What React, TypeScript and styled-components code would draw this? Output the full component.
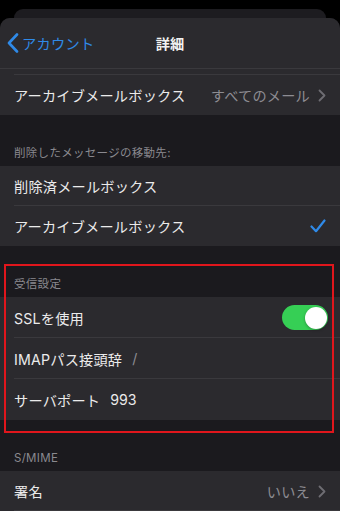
import React, { FunctionComponent } from "react"
import styled, { createGlobalStyle } from "styled-components"

const GlobalStyle = createGlobalStyle`
  html, body {
    margin: 0;
    padding: 0;
    background: #000000;
  }
  body {
    font-family: Inter, "Noto Sans CJK JP", sans-serif;
    -webkit-font-smoothing: antialiased;
  }
`

const Screen = styled.div`
  position: relative;
  width: 340px;
  height: 511px;
  overflow: hidden;
  background: #000000;
  padding-top: 9px;
  box-sizing: border-box;
  display: flex;
  flex-direction: column;
`

const BackCard = styled.div`
  margin: 0 14px;
  height: 9px;
  flex-shrink: 0;
  background: #1d1c20;
  border-radius: 10px 10px 0 0;
`

const Sheet = styled.div`
  flex: 1;
  background: #1b1a1e;
  border-radius: 10px 10px 0 0;
  overflow: hidden;
  display: flex;
  flex-direction: column;
`

const NavBar = styled.div`
  height: 50px;
  flex-shrink: 0;
  background: #2b2a2e;
  border-bottom: 1px solid #3a393d;
  display: flex;
  align-items: center;
  position: relative;
`

const BackButton = styled.div`
  display: flex;
  align-items: center;
  gap: 3px;
  padding-left: 7px;
  color: #2f8ae8;
  font-size: 14.2px;
  letter-spacing: 0.3px;
`

const Title = styled.div`
  position: absolute;
  left: 0;
  right: 0;
  text-align: center;
  color: #f2f2f2;
  font-size: 14.2px;
  font-weight: 600;
  pointer-events: none;
`

const Group = styled.div`
  background: #2b2a2e;
  display: flex;
  flex-direction: column;
`

const ScrolledEdge = styled.div`
  height: 5px;
  border-bottom: 1px solid #3a393d;
  margin-left: 14px;
`

const Row = styled.div<{ $last?: boolean; $h?: number }>`
  height: ${(p) => p.$h ?? 40}px;
  display: flex;
  align-items: center;
  padding: 0 14px;
  box-sizing: border-box;
  position: relative;
  &::after {
    content: "";
    display: ${(p) => (p.$last ? "none" : "block")};
    position: absolute;
    left: 14px;
    right: 0;
    bottom: 0;
    height: 1px;
    background: #3a393d;
  }
`

const Label = styled.span`
  color: #ebebeb;
  font-size: 14.2px;
  letter-spacing: 0.2px;
`

const FieldValue = styled.span<{ $muted?: boolean }>`
  margin-left: 10px;
  color: ${(p) => (p.$muted ? "#8d8c92" : "#ebebeb")};
  font-size: 14.2px;
`

const Detail = styled.span`
  margin-left: auto;
  display: flex;
  align-items: center;
  gap: 8px;
  color: #8d8c92;
  font-size: 14.2px;
  letter-spacing: 0.2px;
`

const SectionHeader = styled.div`
  height: 51px;
  flex-shrink: 0;
  box-sizing: border-box;
  padding: 0 14px 6px;
  display: flex;
  align-items: flex-end;
  color: #8a898f;
  font-size: 11.5px;
  letter-spacing: 0.3px;
`

const Toggle = styled.div<{ $on: boolean }>`
  margin-left: auto;
  margin-right: -2px;
  width: 46px;
  height: 25px;
  border-radius: 13px;
  background: ${(p) => (p.$on ? "#36cf55" : "#3a393d")};
  position: relative;
  &::after {
    content: "";
    position: absolute;
    top: 1.5px;
    ${(p) => (p.$on ? "right: 1.5px;" : "left: 1.5px;")}
    width: 22px;
    height: 22px;
    border-radius: 50%;
    background: #ffffff;
    box-shadow: 0 1px 3px rgba(0, 0, 0, 0.3);
  }
`

const Highlight = styled.div`
  position: absolute;
  left: 4px;
  top: 264px;
  width: 330px;
  height: 169px;
  border: 2px solid #e0161c;
  box-sizing: border-box;
  pointer-events: none;
`

const Chevron: FunctionComponent = () => (
  <svg width="8" height="13" viewBox="0 0 8 13" fill="none">
    <path d="M1.5 1.5 L6.5 6.5 L1.5 11.5" stroke="#6e6d73" strokeWidth="1.8" strokeLinecap="round" strokeLinejoin="round" />
  </svg>
)

const BackChevron: FunctionComponent = () => (
  <svg width="12" height="20" viewBox="0 0 12 20" fill="none">
    <path d="M10 1.5 L2 10 L10 18.5" stroke="#2f8ae8" strokeWidth="2.6" strokeLinecap="round" strokeLinejoin="round" />
  </svg>
)

const Check: FunctionComponent = () => (
  <svg width="16" height="14" viewBox="0 0 16 14" fill="none" style={{ marginLeft: "auto", marginRight: 0 }}>
    <path d="M1.5 7.5 L6 12.2 L14.5 1.5" stroke="#2f8ae8" strokeWidth="2.2" strokeLinecap="round" strokeLinejoin="round" />
  </svg>
)

export default function App() {
  return (
    <>
      <GlobalStyle />
      <Screen>
        <BackCard />
        <Sheet>
          <NavBar>
            <BackButton>
              <BackChevron />
              アカウント
            </BackButton>
            <Title>詳細</Title>
          </NavBar>
          <Group>
            <ScrolledEdge />
            <Row $last>
              <Label>アーカイブメールボックス</Label>
              <Detail>
                すべてのメール
                <Chevron />
              </Detail>
            </Row>
          </Group>

          <SectionHeader>削除したメッセージの移動先:</SectionHeader>
          <Group>
            <Row>
              <Label>削除済メールボックス</Label>
            </Row>
            <Row $last>
              <Label>アーカイブメールボックス</Label>
              <Check />
            </Row>
          </Group>

          <SectionHeader>受信設定</SectionHeader>
          <Group>
            <Row $h={41}>
              <Label>SSLを使用</Label>
              <Toggle $on />
            </Row>
            <Row $h={41}>
              <Label>IMAPパス接頭辞</Label>
              <FieldValue $muted>/</FieldValue>
            </Row>
            <Row $h={41} $last>
              <Label>サーバポート</Label>
              <FieldValue>993</FieldValue>
            </Row>
          </Group>

          <SectionHeader>S/MIME</SectionHeader>
          <Group>
            <Row>
              <Label>署名</Label>
              <Detail>
                いいえ
                <Chevron />
              </Detail>
            </Row>
          </Group>
        </Sheet>
        <Highlight />
      </Screen>
    </>
  )
}
